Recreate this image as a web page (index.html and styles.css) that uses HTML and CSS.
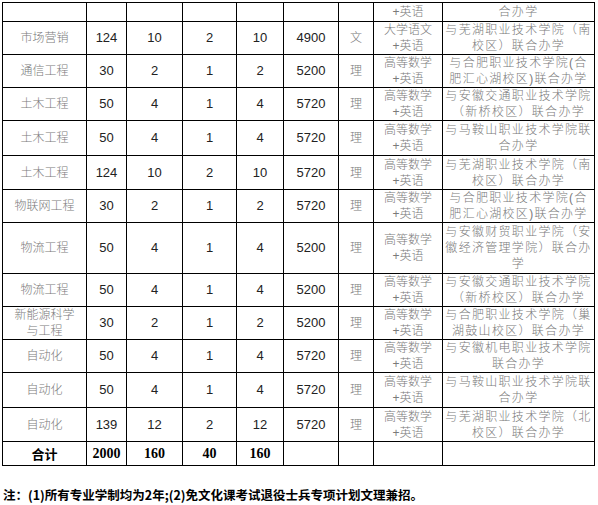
FILE: index.html
```html
<!DOCTYPE html>
<html lang="zh-CN">
<head>
<meta charset="utf-8">
<title>招生计划</title>
<link rel="stylesheet" href="styles.css">
</head>
<body>
<div class="page">
<table class="plan">
<colgroup>
<col class="c-name"><col class="c-n1"><col class="c-n2"><col class="c-n3"><col class="c-n4"><col class="c-fee"><col class="c-type"><col class="c-exam"><col class="c-note">
</colgroup>
<tbody>
<tr class="h19"><td></td><td></td><td></td><td></td><td></td><td></td><td></td><td class="cn">+英语</td><td class="cn wide">合办学</td></tr>
<tr class="h33"><td class="cn">市场营销</td><td class="num">124</td><td class="num">10</td><td class="num">2</td><td class="num">10</td><td class="num">4900</td><td class="cn">文</td><td class="cn">大学语文<br>+英语</td><td class="cn wide">与芜湖职业技术学院（南<br>校区）联合办学</td></tr>
<tr class="h32"><td class="cn">通信工程</td><td class="num">30</td><td class="num">2</td><td class="num">1</td><td class="num">2</td><td class="num">5200</td><td class="cn">理</td><td class="cn">高等数学<br>+英语</td><td class="cn wide">与合肥职业技术学院(合<br>肥汇心湖校区)联合办学</td></tr>
<tr class="h32"><td class="cn">土木工程</td><td class="num">50</td><td class="num">4</td><td class="num">1</td><td class="num">4</td><td class="num">5720</td><td class="cn">理</td><td class="cn">高等数学<br>+英语</td><td class="cn wide">与安徽交通职业技术学院<br>（新桥校区）联合办学</td></tr>
<tr class="h35"><td class="cn">土木工程</td><td class="num">50</td><td class="num">4</td><td class="num">1</td><td class="num">4</td><td class="num">5720</td><td class="cn">理</td><td class="cn">高等数学<br>+英语</td><td class="cn wide">与马鞍山职业技术学院联<br>合办学</td></tr>
<tr class="h34"><td class="cn">土木工程</td><td class="num">124</td><td class="num">10</td><td class="num">2</td><td class="num">10</td><td class="num">5720</td><td class="cn">理</td><td class="cn">高等数学<br>+英语</td><td class="cn wide">与芜湖职业技术学院（南<br>校区）联合办学</td></tr>
<tr class="h33"><td class="cn">物联网工程</td><td class="num">30</td><td class="num">2</td><td class="num">1</td><td class="num">2</td><td class="num">5720</td><td class="cn">理</td><td class="cn">高等数学<br>+英语</td><td class="cn wide">与合肥职业技术学院(合<br>肥汇心湖校区)联合办学</td></tr>
<tr class="h51"><td class="cn">物流工程</td><td class="num">50</td><td class="num">4</td><td class="num">1</td><td class="num">4</td><td class="num">5200</td><td class="cn">理</td><td class="cn">高等数学<br>+英语</td><td class="cn wide">与安徽财贸职业学院（安<br>徽经济管理学院）联合办<br>学</td></tr>
<tr class="h33"><td class="cn">物流工程</td><td class="num">50</td><td class="num">4</td><td class="num">1</td><td class="num">4</td><td class="num">5200</td><td class="cn">理</td><td class="cn">高等数学<br>+英语</td><td class="cn wide">与安徽交通职业技术学院<br>（新桥校区）联合办学</td></tr>
<tr class="h32"><td class="cn">新能源科学<br>与工程</td><td class="num">30</td><td class="num">2</td><td class="num">1</td><td class="num">2</td><td class="num">5200</td><td class="cn">理</td><td class="cn">高等数学<br>+英语</td><td class="cn wide">与合肥职业技术学院（巢<br>湖鼓山校区）联合办学</td></tr>
<tr class="h32"><td class="cn">自动化</td><td class="num">50</td><td class="num">4</td><td class="num">1</td><td class="num">4</td><td class="num">5720</td><td class="cn">理</td><td class="cn">高等数学<br>+英语</td><td class="cn wide">与安徽机电职业技术学院<br>联合办学</td></tr>
<tr class="h35"><td class="cn">自动化</td><td class="num">50</td><td class="num">4</td><td class="num">1</td><td class="num">4</td><td class="num">5720</td><td class="cn">理</td><td class="cn">高等数学<br>+英语</td><td class="cn wide">与马鞍山职业技术学院联<br>合办学</td></tr>
<tr class="h34"><td class="cn">自动化</td><td class="num">139</td><td class="num">12</td><td class="num">2</td><td class="num">12</td><td class="num">5720</td><td class="cn">理</td><td class="cn">高等数学<br>+英语</td><td class="cn wide">与芜湖职业技术学院（北<br>校区）联合办学</td></tr>
<tr class="h24 total"><td class="tl">合计</td><td class="tn">2000</td><td class="tn">160</td><td class="tn">40</td><td class="tn">160</td><td></td><td></td><td></td><td></td></tr>
</tbody>
</table>
<p class="remark">注：(1)所有专业学制均为2年;(2)免文化课考试退役士兵专项计划文理兼招。</p>
</div>
</body>
</html>
```

FILE: styles.css
```css
html, body {
  margin: 0;
  padding: 0;
  background: #ffffff;
}

.page {
  padding: 2px 0 0 2px;
}

.plan {
  border-collapse: collapse;
  table-layout: fixed;
  width: 593px;
}

.plan td {
  border: 1px solid #000;
  padding: 0;
  text-align: center;
  vertical-align: middle;
  line-height: 16px;
}

.c-name { width: 84px; }
.c-n1 { width: 40px; }
.c-n2 { width: 56px; }
.c-n3 { width: 54px; }
.c-n4 { width: 47px; }
.c-fee { width: 55px; }
.c-type { width: 35px; }
.c-exam { width: 69px; }
.c-note { width: 152px; }

.h19 { height: 19px; }
.h24 { height: 24px; }
.h32 { height: 32px; }
.h33 { height: 33px; }
.h34 { height: 34px; }
.h35 { height: 35px; }
.h51 { height: 51px; }

.cn {
  font-family: "Liberation Sans", "Noto Sans CJK SC", sans-serif;
  font-size: 12px;
  font-weight: 300;
  color: #7a7a7a;
}

.cn.wide {
  letter-spacing: 1.3px;
}

.num {
  font-family: "Liberation Sans", Arial, sans-serif;
  font-size: 13px;
  color: #222;
}

.tl {
  font-family: "Noto Sans CJK SC", sans-serif;
  font-size: 13px;
  font-weight: 700;
  color: #000;
}

.tn {
  font-family: "Liberation Serif", "Noto Sans CJK SC", serif;
  font-size: 14px;
  font-weight: 700;
  color: #000;
}

.remark {
  margin: 21px 0 0 1px;
  font-family: "Noto Sans CJK SC", sans-serif;
  font-size: 12.5px;
  line-height: 16px;
  font-weight: 700;
  color: #000;
}
```
